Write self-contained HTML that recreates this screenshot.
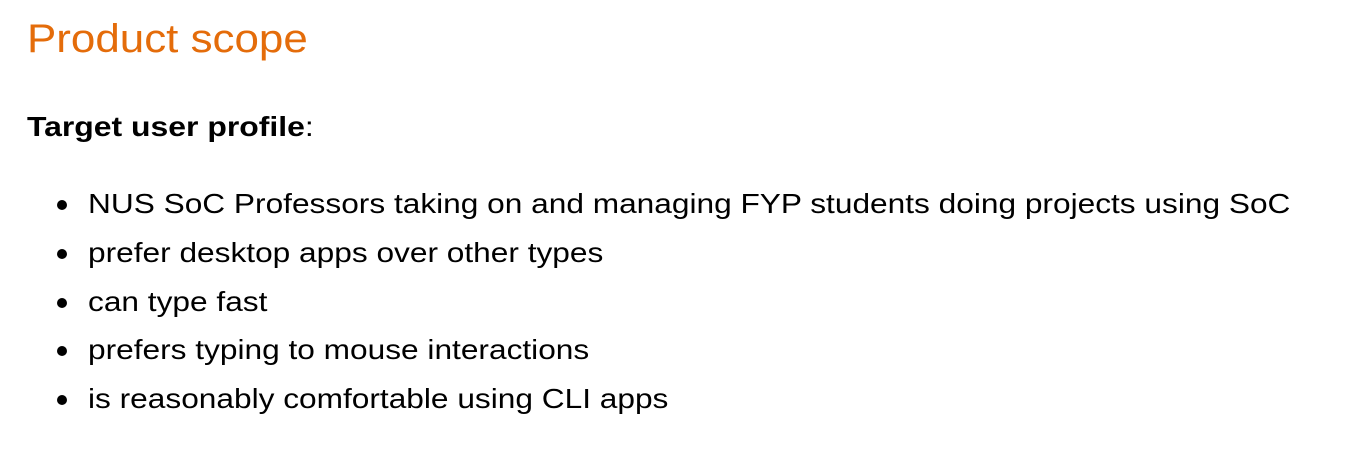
<!DOCTYPE html>
<html><head><meta charset="utf-8"><style>
html,body{margin:0;padding:0;background:#fff;width:1363px;height:452px;overflow:hidden}
body{font-family:"Liberation Sans",sans-serif;color:#000;position:relative}
.s{display:inline-block;transform-origin:0 50%;white-space:nowrap}
h2{position:absolute;left:27px;top:14px;margin:0;font-weight:normal;color:#e46c0a;font-size:40px;line-height:50px}
h2 .s{transform:scaleX(1.098)}
.p{position:absolute;left:27px;top:108px;font-size:28px;line-height:38px;margin:0}
.p .s{transform:scaleX(1.14)}
ul{position:absolute;left:0;top:180px;margin:0;padding:0;list-style:none}
li{position:relative;padding-left:88px;font-size:28px;line-height:48.8px;white-space:nowrap}
li .s{transform:scaleX(1.13)}
li:before{content:"";position:absolute;left:57px;top:20px;width:10px;height:10px;border-radius:50%;background:#000}
</style></head><body>
<h2><span class="s">Product scope</span></h2>
<p class="p"><span class="s"><b>Target user profile</b>:</span></p>
<ul>
<li><span class="s">NUS SoC Professors taking on and managing FYP students doing projects using SoC</span></li>
<li><span class="s">prefer desktop apps over other types</span></li>
<li><span class="s">can type fast</span></li>
<li><span class="s">prefers typing to mouse interactions</span></li>
<li><span class="s">is reasonably comfortable using CLI apps</span></li>
</ul>
</body></html>
